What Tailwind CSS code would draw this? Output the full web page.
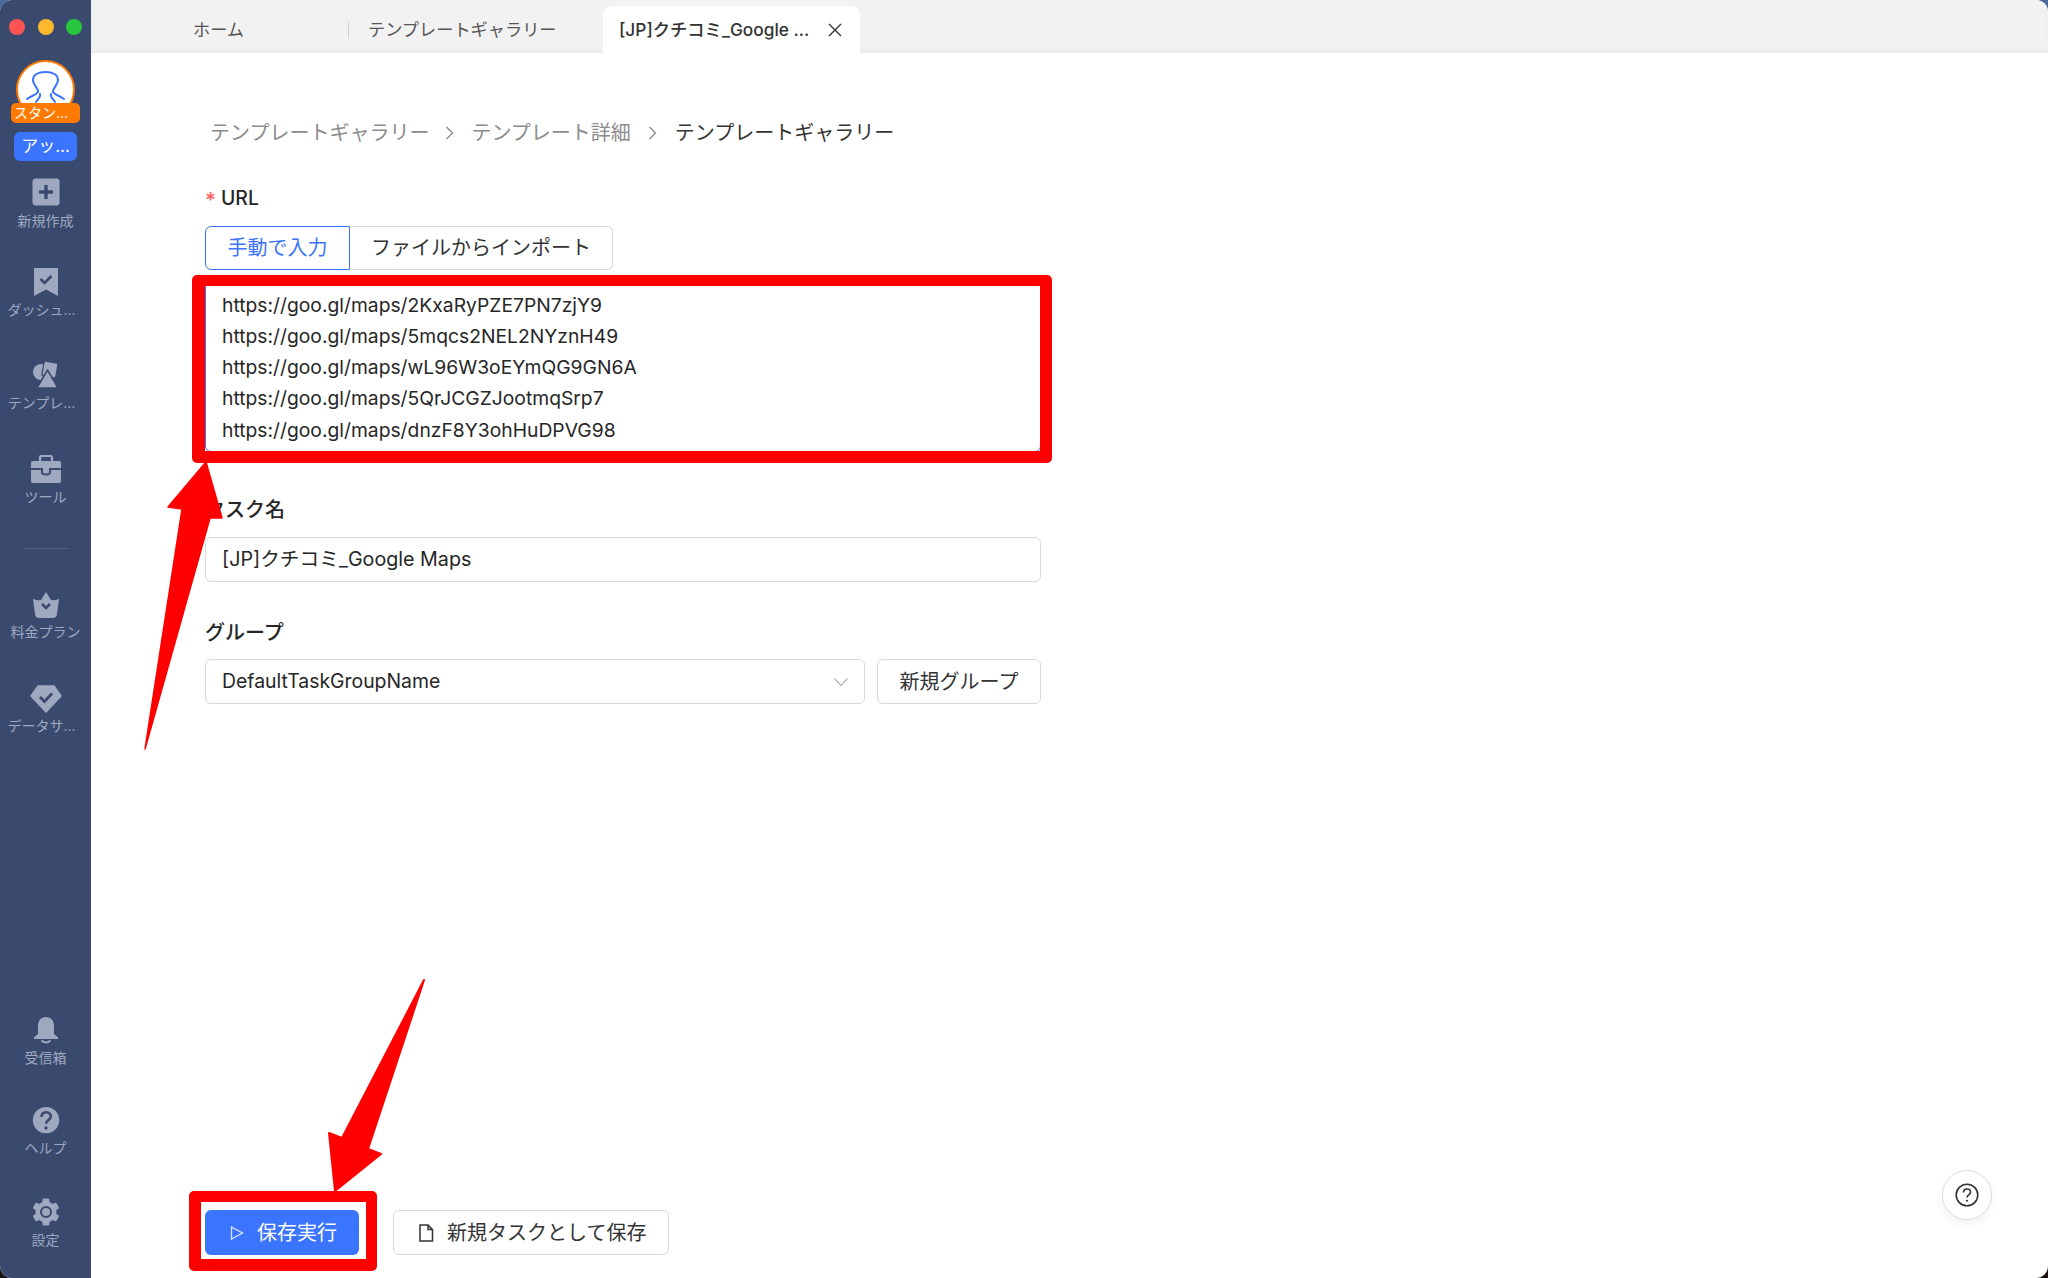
<!DOCTYPE html>
<html lang="ja">
<head>
  <meta charset="UTF-8" />
  <title>テンプレートギャラリー</title>
  <script src="https://cdn.jsdelivr.net/npm/@tailwindcss/browser@4"></script>
</head>
<body class="h-[1278px] bg-[linear-gradient(#4a6a9a_50%,#1a1210_50%)] font-['Inter','Noto_Sans_CJK_JP',sans-serif]">
<div class="relative flex w-[2048px] h-[1278px] overflow-hidden rounded-[12px] bg-white">

  <!-- Sidebar -->
  <aside class="flex flex-col w-[91px] h-full shrink-0 bg-[#3a4a6f] text-[#9ea8bf] text-[14px] leading-[20px] whitespace-nowrap">
    <div class="flex gap-[12.5px] pt-[19px] pl-[9px]">
      <span class="w-[16px] h-[16px] rounded-full bg-[#fc5353]"></span>
      <span class="w-[16px] h-[16px] rounded-full bg-[#fdb82c]"></span>
      <span class="w-[16px] h-[16px] rounded-full bg-[#27c73f]"></span>
    </div>

    <!-- Avatar -->
    <div class="relative mt-[25px] mx-auto w-[59px] h-[59px] rounded-full border-2 border-[#ff7a00] bg-white overflow-hidden">
      <svg class="absolute left-[-2px] top-[-2px]" width="59" height="44" viewBox="0 0 59 44" fill="none" stroke="#3b74ff" stroke-width="2" stroke-linecap="round">
        <path d="M22 32C23 29 17 25 17 20C17 15 22 12 29.500 12C37 12 42 15 42 20C42 25 36 29 37 32" />
        <path d="M22 32C20 35 15 36 11 39M37 32C39 35 44 36 48 39M24 34C25 37 22 39 20 42M35 34C34 37 37 39 39 42" />
      </svg>
    </div>
    <div class="relative z-10 mt-[-16px] mx-[11px] h-[20px] rounded-[5px] bg-[#ff7a00] text-white text-[14px] leading-[20px] pl-[3px]">スタン...</div>
    <div class="mt-[9px] mx-[14px] h-[29px] rounded-[6px] bg-[#3b74ff] text-white text-[17px] leading-[29px] text-center">アッ...</div>

    <!-- Nav -->
    <a class="mt-[17px] flex flex-col items-center h-[53px]">
      <svg width="28" height="28" viewBox="0 0 28 28"><rect x="0.5" y="0.5" width="27" height="27" rx="3" fill="#9ea8bf"/><path d="M14 7v14M7 14h14" stroke="#3a4a6f" stroke-width="3.4"/></svg>
      <span class="mt-[5px]">新規作成</span>
    </a>
    <a class="mt-[37px] flex flex-col items-center h-[53px]">
      <svg width="28" height="28" viewBox="0 0 28 28"><path d="M2 0h24v28l-12-6.5L2 28z" fill="#9ea8bf"/><path d="M8.5 11l4 4 7-7" fill="none" stroke="#3a4a6f" stroke-width="2.6"/></svg>
      <span class="mt-[4px] mr-[8px]">ダッシュ...</span>
    </a>
    <a class="mt-[40px] flex flex-col items-center h-[53px]">
      <svg width="28" height="28" viewBox="0 0 28 28"><circle cx="9" cy="11" r="8" fill="#9ea8bf"/><rect x="11" y="1" width="14" height="15" rx="1.5" transform="rotate(10 18 8)" fill="#9ea8bf" stroke="#3a4a6f" stroke-width="1.2"/><path d="M15.5 9L26 27H5z" fill="#9ea8bf" stroke="#3a4a6f" stroke-width="1.5" stroke-linejoin="round"/></svg>
      <span class="mt-[4px] mr-[8px]">テンプレ...</span>
    </a>
    <a class="mt-[41px] flex flex-col items-center h-[53px]">
      <svg width="32" height="28" viewBox="0 0 32 28"><path d="M10 6V2.5Q10 1 11.5 1h9Q22 1 22 2.5V6" fill="none" stroke="#9ea8bf" stroke-width="2.2"/><path d="M3 6h26q2 0 2 2v5H1V8q0-2 2-2zM1 15h10v2.5q0 3 5 3t5-3V15h10v11q0 2-2 2H3q-2 0-2-2z" fill="#9ea8bf"/><path d="M13 13h6v4q0 1.500-3 1.500T13 17z" fill="#9ea8bf"/></svg>
      <span class="mt-[4px]">ツール</span>
    </a>
    <div class="mt-[40px] mx-[23px] h-px bg-[#55648a]"></div>
    <a class="mt-[42px] flex flex-col items-center h-[53px]">
      <svg width="28" height="28" viewBox="0 0 28 28"><path d="M1 8q5 2 8 1l5-8 5 8q3 1 8-1l-2 15q-.5 4-4 4H7q-3.500 0-4-4z" fill="#9ea8bf"/><path d="M10 13l4 4 4-4" fill="none" stroke="#3a4a6f" stroke-width="2.6"/></svg>
      <span class="mt-[3px]">料金プラン</span>
    </a>
    <a class="mt-[41px] flex flex-col items-center h-[53px]">
      <svg width="32" height="28" viewBox="0 0 32 28"><path d="M8 1h16l7 10-15 16L1 11z" fill="#9ea8bf" stroke="#9ea8bf" stroke-linejoin="round" stroke-width="1.500"/><path d="M10 12l4.500 4.500 7.500-8" fill="none" stroke="#3a4a6f" stroke-width="2.800"/></svg>
      <span class="mt-[3px] mr-[8px]">データサ...</span>
    </a>

    <a class="mt-auto flex flex-col items-center h-[53px]">
      <svg width="26" height="28" viewBox="0 0 26 28"><path d="M13 1c5 0 8 3.500 8 9v8l4 3.500V23H1v-1.500L5 18v-8c0-5.500 3-9 8-9z" fill="#9ea8bf"/><path d="M8.500 24.500q4.500 4 9 0" fill="none" stroke="#9ea8bf" stroke-width="1.800"/></svg>
      <span class="mt-[4px]">受信箱</span>
    </a>
    <a class="mt-[37px] flex flex-col items-center h-[53px]">
      <svg width="32" height="28" viewBox="0 0 32 28"><circle cx="16" cy="14" r="14" fill="#9ea8bf" transform="translate(1 1) scale(.94)"/><path d="M11.500 11c0-3 2-4.800 4.700-4.800s4.600 1.700 4.600 4.200c0 3.500-4.800 3.800-4.800 7.400" fill="none" stroke="#3a4a6f" stroke-width="2.600"/><circle cx="16" cy="22" r="1.700" fill="#3a4a6f"/></svg>
      <span class="mt-[4px]">ヘルプ</span>
    </a>
    <a class="mt-[39px] mb-[27px] flex flex-col items-center h-[53px]">
      <svg width="28" height="28" viewBox="0 0 28 28"><g fill="#9ea8bf"><circle cx="14" cy="14" r="10.500"/><rect x="10.500" y="0.500" width="7" height="27" rx="1.500"/><rect x="10.500" y="0.500" width="7" height="27" rx="1.500" transform="rotate(60 14 14)"/><rect x="10.500" y="0.500" width="7" height="27" rx="1.500" transform="rotate(120 14 14)"/></g><circle cx="14" cy="14" r="5" fill="#9ea8bf" stroke="#3a4a6f" stroke-width="2"/></svg>
      <span class="mt-[4px]">設定</span>
    </a>
  </aside>

  <!-- Main -->
  <main class="flex flex-col flex-1 min-w-0">
    <!-- Tabs -->
    <div class="flex items-end h-[53px] bg-[#f2f2f2] shrink-0 text-[17.200px] text-[#555] shadow-[inset_0_-3px_4px_rgba(0,0,0,0.03)]">
      <div class="flex items-center h-[47px]">
        <span class="ml-[102px] w-[155px]">ホーム</span>
        <span class="w-px h-[17px] bg-[#cfd2d6]"></span>
        <span class="ml-[19px] w-[235px]">テンプレートギャラリー</span>
      </div>
      <div class="flex items-center w-[257px] h-[47px] pl-[16px] rounded-t-[8px] bg-white text-[#333]">
        <span class="font-medium text-[17.300px]">[JP]クチコミ_Google ...</span>
        <svg class="ml-[19px]" width="14" height="14" viewBox="0 0 14 14" fill="none" stroke="#333" stroke-width="1.400"><path d="M1 1l12 12M13 1L1 13"/></svg>
      </div>
    </div>

    <div class="flex flex-col flex-1 pl-[114px]">
      <!-- Breadcrumb -->
      <div class="mt-[66px] flex items-center text-[20px] leading-[28px] text-[#8c8c8c]">
        <span class="ml-[5px]">テンプレートギャラリー</span>
        <svg class="mx-[16px]" width="10" height="16" viewBox="0 0 10 16" fill="none" stroke="#8c8c8c" stroke-width="1.400"><path d="M1.500 2l6 6-6 6"/></svg>
        <span>テンプレート詳細</span>
        <svg class="mx-[17px]" width="10" height="16" viewBox="0 0 10 16" fill="none" stroke="#8c8c8c" stroke-width="1.400"><path d="M1.500 2l6 6-6 6"/></svg>
        <span class="text-[#333]">テンプレートギャラリー</span>
      </div>

      <!-- Form -->
      <form class="mt-[38px] w-[836px]">
        <label class="flex items-center h-[28px] text-[19.400px] text-[#262626] font-medium">
          <span class="w-[16px] text-[#ff5f60] text-[21px] leading-[28px] pt-[3px]">*</span>URL
        </label>
        <div class="mt-[13px] flex h-[44px] text-[20px]">
          <button type="button" class="w-[145px] rounded-l-[6px] border border-[#3b74ff] text-[#3b74ff]">手動で入力</button>
          <button type="button" class="w-[263px] rounded-r-[6px] border border-l-0 border-[#d9d9d9] text-[#333]">ファイルからインポート</button>
        </div>
        <textarea class="block mt-[9px] w-[836px] h-[173px] resize-none rounded-[6px] border border-[#3b74ff] pt-[9.500px] pl-[16px] text-[19.300px] leading-[31.300px] text-[#262626] outline-none">https://goo.gl/maps/2KxaRyPZE7PN7zjY9
https://goo.gl/maps/5mqcs2NEL2NYznH49
https://goo.gl/maps/wL96W3oEYmQG9GN6A
https://goo.gl/maps/5QrJCGZJootmqSrp7
https://goo.gl/maps/dnzF8Y3ohHuDPVG98</textarea>

        <label class="block mt-[44px] h-[28px] text-[20px] leading-[28px] text-[#262626] font-medium">タスク名</label>
        <div class="mt-[13px] flex items-center h-[45px] rounded-[6px] border border-[#d9d9d9] pl-[16px] pt-[1px] text-[19.700px] text-[#262626]">[JP]クチコミ_Google Maps</div>

        <label class="block mt-[37px] h-[28px] text-[20px] leading-[28px] text-[#262626] font-medium">グループ</label>
        <div class="mt-[12px] flex gap-[12px] h-[45px] text-[19.400px] text-[#262626]">
          <div class="flex flex-1 items-center justify-between rounded-[6px] border border-[#d9d9d9] pl-[16px] pr-[15px] pt-[1px]">
            <span>DefaultTaskGroupName</span>
            <svg width="16" height="10" viewBox="0 0 16 10" fill="none" stroke="#b4b4b4" stroke-width="1.200"><path d="M1.500 1.500L8 8.500l6.500-7"/></svg>
          </div>
          <button type="button" class="w-[164px] rounded-[6px] border border-[#d9d9d9] pt-[1px] text-[20px] text-[#333]">新規グループ</button>
        </div>
      </form>

      <!-- Footer actions -->
      <div class="mt-auto mb-[23px] flex gap-[34px] h-[45px] text-[20px]">
        <button type="button" class="flex items-center w-[154px] rounded-[6px] bg-[#3b74ff] text-white pl-[25px]">
          <svg width="14" height="14" viewBox="0 0 14 14" fill="none" stroke="#dbe5ff" stroke-width="1.300"><path d="M1.500 1l11 6-11 6z"/></svg>
          <span class="ml-[13px]">保存実行</span>
        </button>
        <button type="button" class="flex items-center w-[276px] rounded-[6px] border border-[#d9d9d9] text-[#333] pl-[24px]">
          <svg width="16" height="18" viewBox="0 0 16 18" fill="none" stroke="#333" stroke-width="1.500"><path d="M2 1h8l4.500 4.500V17H2zM10 1v4.500h4.500"/></svg>
          <span class="ml-[13px]">新規タスクとして保存</span>
        </button>
      </div>
    </div>
  </main>

  <!-- Floating help -->
  <button class="absolute left-[1942px] top-[1170px] flex items-center justify-center w-[50px] h-[50px] rounded-full border border-[#dedede] bg-white shadow-[0_4px_10px_rgba(0,0,0,0.06)]">
    <svg width="24" height="24" viewBox="0 0 24 24" fill="none" stroke="#333" stroke-width="1.600"><circle cx="12" cy="12" r="10.800"/><path d="M8.500 9.500c0-2.200 1.500-3.500 3.500-3.500s3.500 1.200 3.500 3.200c0 2.600-3.500 2.800-3.500 5.300"/><circle cx="12" cy="17.800" r="1" fill="#333" stroke="none"/></svg>
  </button>

  <!-- Red annotations over the screenshot -->
  <svg class="absolute inset-0 pointer-events-none" width="2048" height="1278" viewBox="0 0 2048 1278">
    <path fill-rule="evenodd" fill="#ff0000" d="M197 275H1047A5 5 0 0 1 1052 280V458A5 5 0 0 1 1047 463H197A5 5 0 0 1 192 458V280A5 5 0 0 1 197 275ZM205 286V451H1040V286Z"/>
    <path fill-rule="evenodd" fill="#ff0000" d="M194 1191H372A5 5 0 0 1 377 1196V1266A5 5 0 0 1 372 1271H194A5 5 0 0 1 189 1266V1196A5 5 0 0 1 194 1191ZM201 1202V1259H366V1202Z"/>
    <path d="M206 462L168 507L182 509L145 749L210 518L222 518Z" fill="#ff0000" stroke="#ff0000" stroke-width="1.500" stroke-linejoin="round"/>
    <path d="M424 980L342 1138L329 1133L335 1191L381 1154L368 1149Z" fill="#ff0000" stroke="#ff0000" stroke-width="2" stroke-linejoin="round"/>
  </svg>
</div>
</body>
</html>
